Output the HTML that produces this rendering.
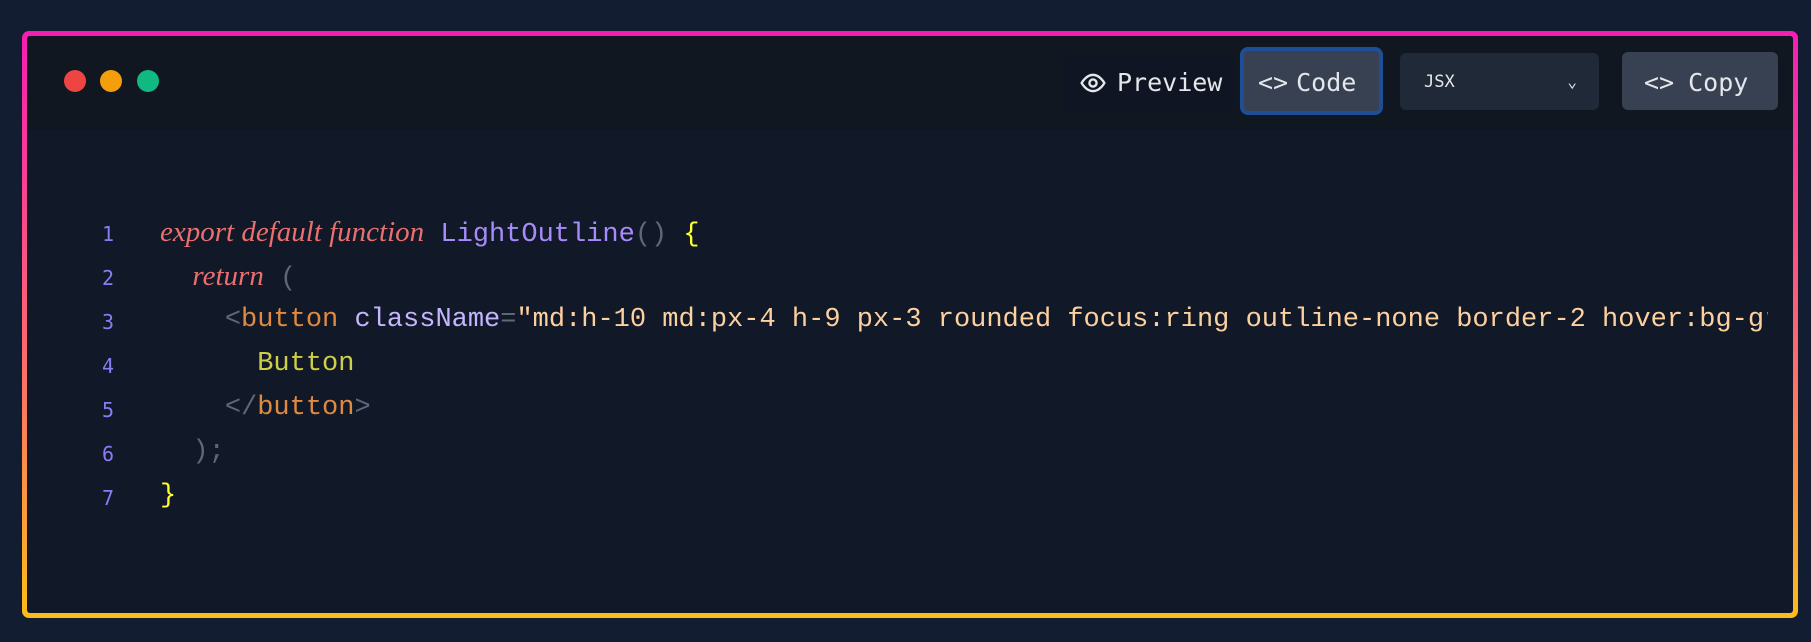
<!DOCTYPE html>
<html><head><style>
html,body{margin:0;padding:0;background:#131d31;width:1811px;height:642px;overflow:hidden}
.frame{position:absolute;left:22px;top:31px;width:1776px;height:587px;border-radius:7px;background:linear-gradient(180deg,#f51db4 0%,#fb6a6e 55%,#fbbd18 100%)}
.inner{position:absolute;left:5px;top:5px;right:5px;bottom:5px;background:#111827;border-radius:3px;overflow:hidden}
.head{position:absolute;left:0;top:0;right:0;height:94px;background:#111720}
.dot{position:absolute;top:34px;width:22px;height:22px;border-radius:50%}
.btn{position:absolute;font-family:"DejaVu Sans Mono","Liberation Mono",monospace;color:#e5e7eb;font-size:25px;display:flex;align-items:center;box-sizing:border-box}
.code{position:absolute;left:0;top:0;font-family:"Liberation Mono",monospace;font-size:27px;white-space:pre}
.ln{position:absolute;left:75px;width:40px;font-size:20px;color:#8b7cf6;font-family:"DejaVu Sans Mono",monospace}
.l{position:absolute;left:133px;width:1608px;overflow:hidden;height:40px;line-height:40px}
.kw{color:#ec6f6f;font-style:italic;font-family:"Liberation Serif",serif;font-size:29px}
.fn{color:#a78bfa}.p{color:#5f6678}.y{color:#ffff33}.t{color:#e08a40}.a{color:#c4b5fd}.s{color:#fdd0a0}.b{color:#cfcf45}
</style></head><body>
<div class="frame"><div class="inner">
<div class="head">
<div class="dot" style="left:37px;background:#ef4444"></div>
<div class="dot" style="left:73px;background:#f59e0b"></div>
<div class="dot" style="left:110px;background:#10b981"></div>
<div class="btn" style="left:1036px;top:18px;width:171px;height:57px;background:#0f1522;border-radius:6px;padding-left:14px">
<svg width="32" height="26" viewBox="0 0 24 24" fill="none" stroke="#e5e7eb" stroke-width="2.2"><path d="M1.5 12s4-7.5 10.5-7.5S22.5 12 22.5 12s-4 7.5-10.5 7.5S1.5 12 1.5 12z"/><circle cx="12" cy="12" r="3.3"/></svg><span style="margin-left:8px">Preview</span></div>
<div class="btn" style="left:1213px;top:11px;width:143px;height:68px;background:#374151;border:4px solid #1e4f96;border-radius:8px;padding-left:14px;padding-top:2px">&lt;&gt;<span style="margin-left:8px">Code</span></div>
<div class="btn" style="left:1373px;top:17px;width:199px;height:57px;background:#1f2937;border-radius:6px;padding-left:24px;font-size:17px">JSX<span style="position:absolute;right:22px;font-size:16px">&#8964;</span></div>
<div class="btn" style="left:1595px;top:16px;width:156px;height:58px;background:#374151;border-radius:6px;padding-left:22px;padding-top:2px">&lt;&gt;<span style="margin-left:14px">Copy</span></div>
</div>
<div class="code">
<div class="ln" style="top:186px">1</div><div class="l" style="top:176px"><span class="kw">export default function</span> <span class="fn">LightOutline</span><span class="p">()</span> <span class="y">{</span></div>
<div class="ln" style="top:230px">2</div><div class="l" style="top:220px">  <span class="kw">return</span> <span class="p">(</span></div>
<div class="ln" style="top:274px">3</div><div class="l" style="top:264px">    <span class="p">&lt;</span><span class="t">button</span> <span class="a">className</span><span class="p">=</span><span class="s">"md:h-10 md:px-4 h-9 px-3 rounded focus:ring outline-none border-2 hover:bg-gray-100"</span></div>
<div class="ln" style="top:318px">4</div><div class="l" style="top:308px">      <span class="b">Button</span></div>
<div class="ln" style="top:362px">5</div><div class="l" style="top:352px">    <span class="p">&lt;/</span><span class="t">button</span><span class="p">&gt;</span></div>
<div class="ln" style="top:406px">6</div><div class="l" style="top:396px">  <span class="p">);</span></div>
<div class="ln" style="top:450px">7</div><div class="l" style="top:440px"><span class="y">}</span></div>
</div>
</div></div>
</body></html>
